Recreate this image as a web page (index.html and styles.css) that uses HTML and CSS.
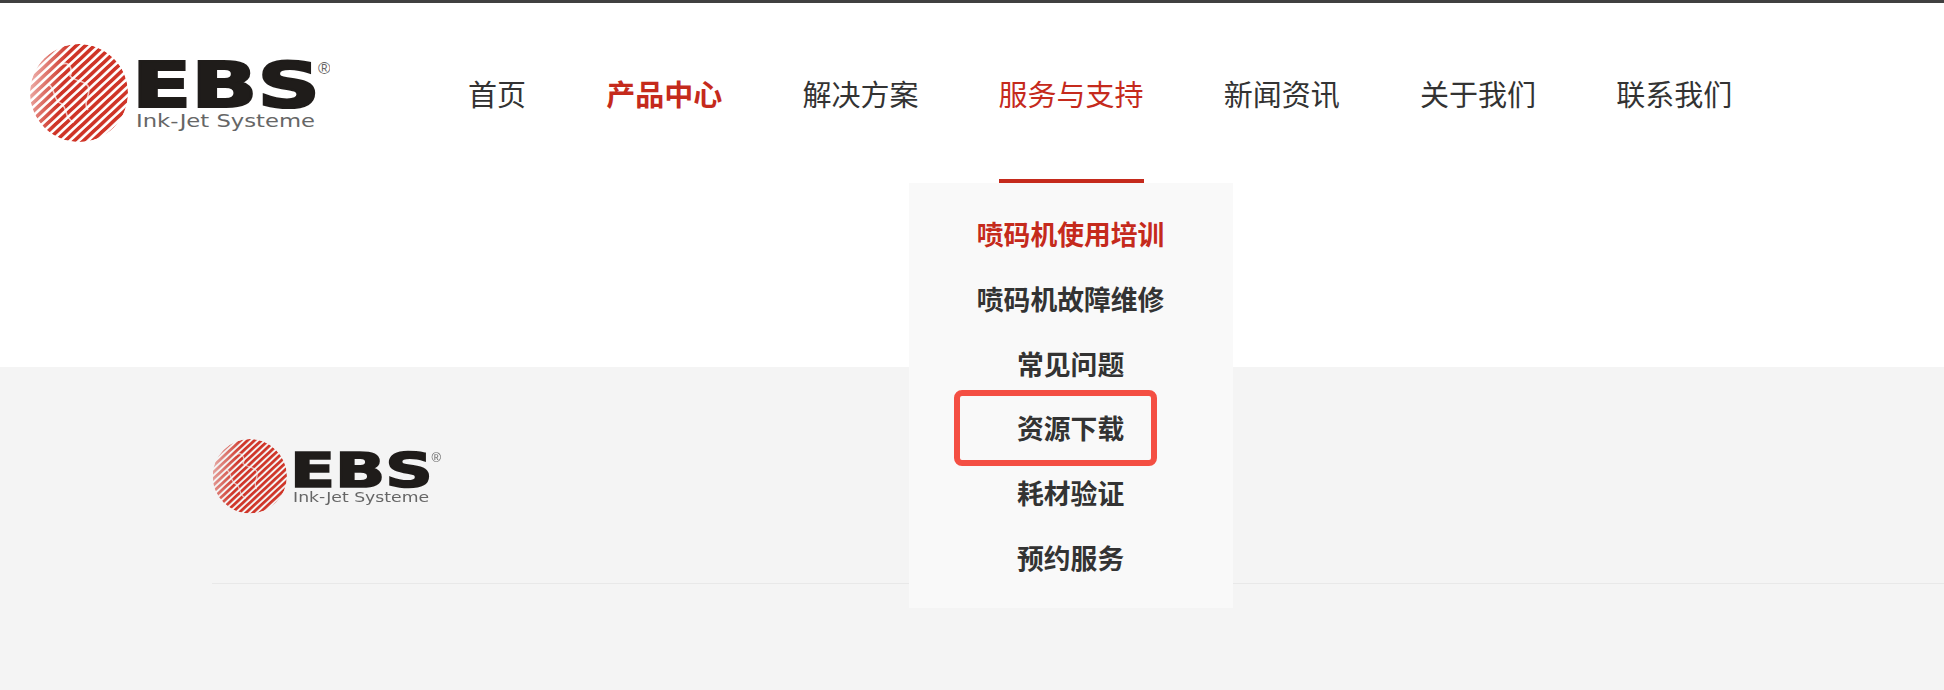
FILE: index.html
```html
<!DOCTYPE html>
<html lang="zh-CN">
<head>
  <meta charset="UTF-8" />
  <title>EBS</title>
  <link rel="stylesheet" href="styles.css">
</head>
<body>
  <svg class="defs" width="0" height="0">
    <defs>
      <pattern id="stripes" width="6.2" height="6.2" patternUnits="userSpaceOnUse" patternTransform="rotate(-43)">
        <rect width="6.2" height="3.6" fill="#cf3427" />
      </pattern>
      <linearGradient id="fade" x1="0" y1="0.4" x2="1" y2="0.6">
        <stop offset="0" stop-color="#666" />
        <stop offset="0.32" stop-color="#fff" />
      </linearGradient>
      <mask id="globe" maskUnits="userSpaceOnUse" x="0" y="0" width="100" height="100">
        <circle cx="49" cy="49" r="49" fill="url(#fade)" />
        <path d="M30 22 C38 14 44 26 40 32 C46 38 54 36 58 42 C62 50 52 58 58 66 M18 40 C26 44 22 56 32 60 C38 66 34 74 44 78" fill="none" stroke="#000" stroke-opacity="0.7" stroke-width="1.6" />
      </mask>
      <symbol id="ebs-logo" viewBox="0 0 300 100">
        <circle cx="49" cy="49" r="49" fill="url(#stripes)" mask="url(#globe)" />
        <text class="logo-ebs" x="102" y="63" textLength="188" lengthAdjust="spacingAndGlyphs">EBS</text>
        <text class="logo-sub" x="106" y="83" textLength="179" lengthAdjust="spacingAndGlyphs">Ink-Jet Systeme</text>
        <text class="logo-reg" x="288" y="30">®</text>
      </symbol>
    </defs>
  </svg>

  <header class="site-header">
    <a class="logo" href="#"><svg class="logo-img"><use href="#ebs-logo" /></svg></a>
    <ul class="nav">
      <li><a href="#">首页</a></li>
      <li><a class="bold" href="#">产品中心</a></li>
      <li><a href="#">解决方案</a></li>
      <li class="active">
        <a href="#">服务与支持</a>
        <ul class="dropdown">
          <li><a class="current" href="#">喷码机使用培训</a></li>
          <li><a href="#">喷码机故障维修</a></li>
          <li><a href="#">常见问题</a></li>
          <li><a href="#">资源下载</a><span class="mark"></span></li>
          <li><a href="#">耗材验证</a></li>
          <li><a href="#">预约服务</a></li>
        </ul>
      </li>
      <li><a href="#">新闻资讯</a></li>
      <li><a href="#">关于我们</a></li>
      <li><a href="#">联系我们</a></li>
    </ul>
  </header>

  <footer class="site-footer">
    <div class="footer-top">
      <svg class="footer-logo"><use href="#ebs-logo" /></svg>
    </div>
  </footer>
</body>
</html>
```

FILE: styles.css
```css
* {
  box-sizing: border-box;
}

html, body {
  height: 100%;
}

body {
  margin: 0;
  display: flex;
  flex-direction: column;
  border-top: 3px solid #404040;
  font-family: "Noto Sans CJK SC", "Liberation Sans", sans-serif;
  color: #333;
  overflow: hidden;
}

a {
  color: inherit;
  text-decoration: none;
}

ul {
  list-style: none;
  margin: 0;
  padding: 0;
}

.defs {
  display: block;
  height: 0;
}

.site-header {
  display: flex;
  height: 364px;
  padding: 41px 0 0 30px;
  background: #fff;
}

.logo-img {
  display: block;
  width: 300px;
  height: 100px;
}

.logo-ebs {
  font-family: "DejaVu Sans", sans-serif;
  font-weight: bold;
  font-size: 62px;
  fill: #1f1c1a;
  stroke: #1f1c1a;
  stroke-width: 2.2px;
}

.logo-sub {
  font-family: "DejaVu Sans", sans-serif;
  font-size: 18px;
  fill: #666;
}

.logo-reg {
  font-family: "Liberation Sans", sans-serif;
  font-size: 17px;
  fill: #666;
}

.nav {
  display: flex;
  gap: 80.2px;
  margin: 29px 0 0 138px;
  font-size: 29px;
  line-height: 40px;
}

.nav > li {
  position: relative;
  height: 110px;
}

.bold {
  font-weight: bold;
  color: #c52a1c;
}

.active > a {
  color: #c52a1c;
}

.active {
  border-bottom: 4px solid #c52a1c;
}

.dropdown {
  position: absolute;
  top: 110px;
  left: -90px;
  width: 324px;
  height: 425px;
  padding: 19px 0 0;
  background: #f9f9f9;
  font-size: 26.8px;
  font-weight: bold;
  line-height: 40px;
  text-align: center;
}

.dropdown li {
  position: relative;
  height: 64.8px;
  padding-top: 12px;
}

.current {
  color: #c52a1c;
}

.mark {
  position: absolute;
  top: -6px;
  left: 45px;
  width: 203px;
  height: 76px;
  border: 6px solid #f44f43;
  border-radius: 8px;
}

.site-footer {
  flex: 1;
  padding: 72px 0 0 212px;
  background: #f4f4f4;
}

.footer-top {
  height: 145px;
  border-bottom: 1px solid #e8e8e8;
}

.footer-logo {
  display: block;
  width: 229px;
  height: 76px;
  filter: blur(0.7px);
}
```
